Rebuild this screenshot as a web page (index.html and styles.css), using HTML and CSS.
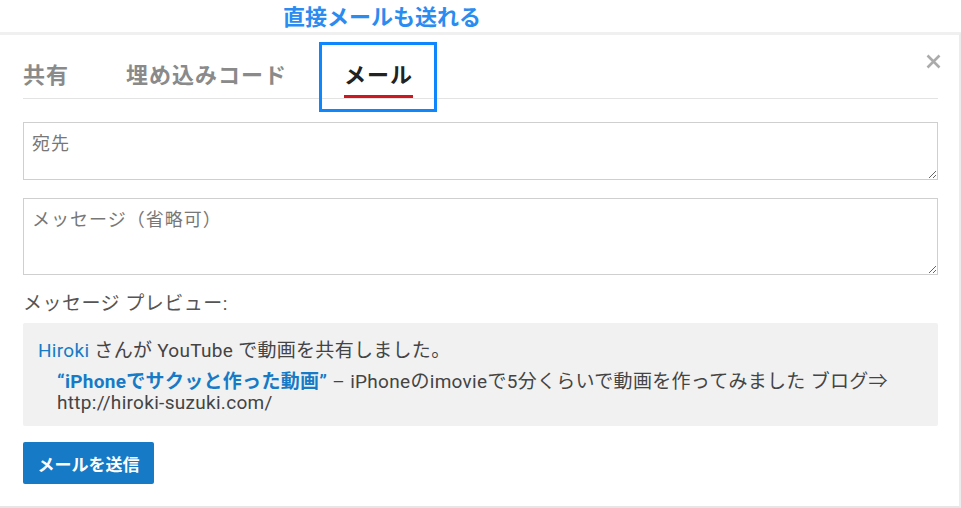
FILE: index.html
```html
<!DOCTYPE html>
<html lang="ja">
<head>
<meta charset="utf-8">
<title>メール共有</title>
<link rel="stylesheet" href="styles.css">
</head>
<body>
<div class="caption">直接メールも送れる</div>
<div class="dialog">
  <div class="tabs">
    <div class="tab">共有</div>
    <div class="tab">埋め込みコード</div>
    <div class="tab active">メール<span class="highlight"></span></div>
    <button class="close" aria-label="閉じる">
      <svg width="15" height="15" viewBox="0 0 15 15"><path d="M1.5 1.5 L13.5 13.5 M13.5 1.5 L1.5 13.5" stroke="#ababab" stroke-width="2.6" fill="none"/></svg>
    </button>
  </div>
  <textarea class="field to" placeholder="宛先"></textarea>
  <textarea class="field msg" placeholder="メッセージ（省略可）"></textarea>
  <div class="label">メッセージ プレビュー:</div>
  <div class="preview">
    <div class="line1"><span class="name">Hiroki</span> さんが YouTube で動画を共有しました。</div>
    <div class="line2"><span class="title">“iPhoneでサクッと作った動画”</span> – iPhoneのimovieで5分くらいで動画を作ってみました ブログ⇒<br>http://hiroki-suzuki.com/</div>
  </div>
  <button class="send">メールを送信</button>
</div>
</body>
</html>
```
FILE: styles.css
```css
html, body {
  margin: 0;
  padding: 0;
  background: #fff;
}
body {
  width: 961px;
  height: 508px;
  overflow: hidden;
  font-family: Roboto, "Noto Sans CJK JP", sans-serif;
  color: #333;
}
.caption {
  height: 30px;
  margin-bottom: 2px;
  line-height: 30px;
  padding-left: 283px;
  font-size: 22px;
  font-weight: bold;
  color: #2a8cf0;
  font-family: "Noto Sans CJK JP", sans-serif;
}
.dialog {
  box-sizing: border-box;
  width: 961px;
  height: 476px;
  border-top: 3px solid #f0f0f0;
  border-right: 2px solid #ececec;
  border-bottom: 2px solid #e6e6e6;
  padding: 0 21px 0 23px;
}
.tabs {
  display: flex;
  align-items: flex-start;
  border-bottom: 1px solid #e3e3e3;
  height: 63px;
}
.tab {
  position: relative;
  padding-top: 23px;
  line-height: 30px;
  height: 33px;
  padding-bottom: 7px;
  font-size: 22px;
  letter-spacing: 1px;
  font-weight: bold;
  color: #8a8a8a;
  margin-right: 57px;
  border-bottom: 3px solid transparent;
  font-family: "Noto Sans CJK JP", sans-serif;
}
.tab.active {
  color: #222;
  border-bottom-color: #cc181e;
  height: 30px;
}
.highlight {
  position: absolute;
  top: 7px;
  left: -25px;
  right: -24px;
  bottom: -17px;
  border: 3px solid #0f86fb;
}
.close {
  margin-left: auto;
  margin-right: -3px;
  margin-top: 19px;
  padding: 0;
  border: 0;
  background: none;
  width: 15px;
  height: 15px;
  display: flex;
}
.field {
  display: block;
  box-sizing: border-box;
  width: 915px;
  border: 1px solid #cfcfcf;
  border-radius: 0;
  padding: 10px 8px;
  font-family: Roboto, "Noto Sans CJK JP", sans-serif;
  font-size: 18px;
  letter-spacing: 1px;
  line-height: 22px;
  color: #333;
  resize: vertical;
  margin: 0;
}
.field::placeholder {
  color: #777;
}
.to {
  height: 58px;
  margin-top: 23px;
}
.msg {
  height: 77px;
  margin-top: 18px;
}
.label {
  margin-top: 18px;
  font-size: 19px;
  letter-spacing: 0.5px;
  line-height: 22px;
  color: #555;
}
.preview {
  width: 915px;
  box-sizing: border-box;
  margin-top: 8px;
  background: #f1f1f1;
  border-radius: 2px;
  padding: 17px 15px 13px;
  height: 103px;
  font-size: 19px;
  letter-spacing: 0.3px;
  color: #444;
}
.line1 {
  line-height: 22px;
}
.name, .title {
  color: #167ac6;
}
.title {
  font-weight: bold;
}
.line2 {
  margin-top: 9px;
  margin-left: 19px;
  line-height: 21px;
}
.send {
  display: block;
  margin-top: 16px;
  height: 42px;
  width: 131px;
  padding: 0;
  border: 0;
  border-radius: 2px;
  background: #167ac6;
  color: #fff;
  font-family: "Noto Sans CJK JP", sans-serif;
  font-size: 17px;
  font-weight: bold;
}
```
